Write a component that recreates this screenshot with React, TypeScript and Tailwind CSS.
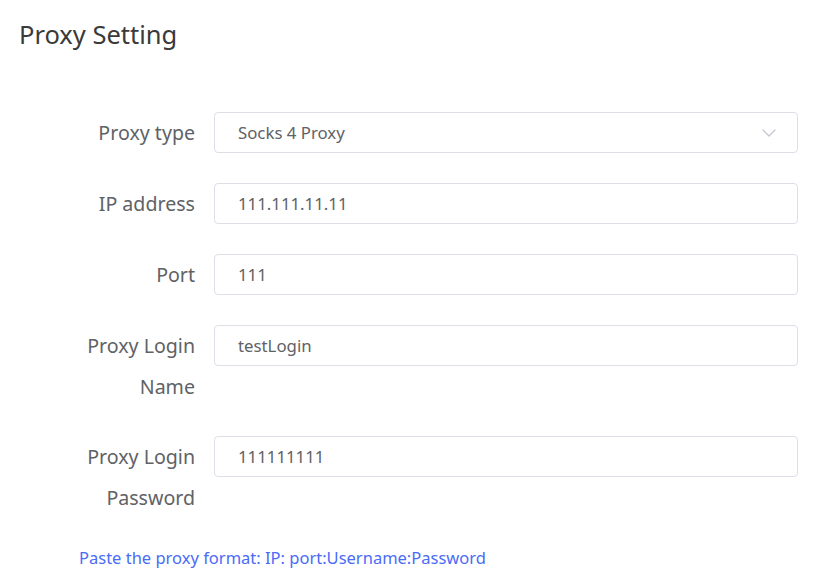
import { ChevronDown } from 'lucide-react'

const font = { fontFamily: '"Noto Sans", "Open Sans", sans-serif' }

function Row({ label, value, select, tight }: { label: React.ReactNode; value: string; select?: boolean; tight?: boolean }) {
  return (
    <div className={tight ? 'mb-[29px] flex items-start' : 'mb-[30px] flex items-start'}>
      <div className="w-[214px] shrink-0 pr-[19px] pl-[79px] text-right text-[19.6px] leading-[41px] text-[#606266]">
        {label}
      </div>
      <div className="flex h-[41px] flex-1 items-center rounded-[4px] border border-[#dcdfe6] bg-white pr-[16px] pl-[23px]">
        <span className="flex-1 text-[16.8px] text-[#606266]">{value}</span>
        {select && <ChevronDown className="h-[24px] w-[24px] text-[#c0c4cc]" strokeWidth={1.2} />}
      </div>
    </div>
  )
}

export default function App() {
  return (
    <div style={font} className="h-[577px] w-[820px] bg-white pr-[22px]">
      <h1 className="pt-[16px] pl-[19px] text-[25.5px] leading-[36px] text-[#3a3a3a]">Proxy Setting</h1>
      <div className="pt-[60px]">
        <Row label="Proxy type" value="Socks 4 Proxy" select />
        <Row label="IP address" value="111.111.11.11" />
        <Row label="Port" value="111" />
        <Row label="Proxy Login Name" value="testLogin" tight />
        <Row label="Proxy Login Password" value="111111111" />
      </div>
      <p className="-mt-[2px] pl-[79px] text-[16.5px] text-[#4a6cf7]">Paste the proxy format: IP: port:Username:Password</p>
    </div>
  )
}
